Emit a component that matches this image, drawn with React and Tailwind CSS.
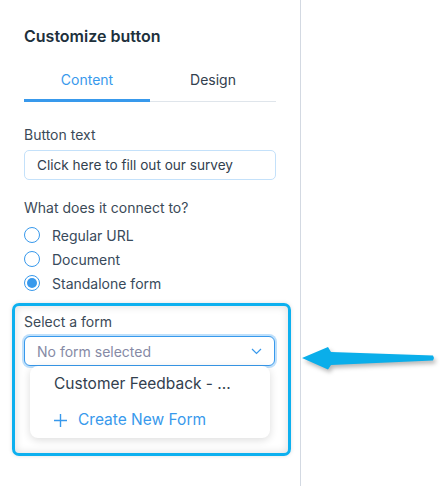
import { useState } from 'react';

const OPTIONS = ['Regular URL', 'Document', 'Standalone form'];

function Radio({ checked }) {
  return (
    <span className="w-[16px] h-[16px] rounded-full border border-[#3899ec] flex items-center justify-center bg-white shrink-0">
      {checked && <span className="w-[10px] h-[10px] rounded-full bg-[#3899ec]" />}
    </span>
  );
}

export default function App() {
  const [tab, setTab] = useState('content');
  const [choice, setChoice] = useState(2);

  return (
    <div className="relative w-[444px] h-[486px] bg-white overflow-hidden" style={{ fontFamily: 'Inter, "Liberation Sans", sans-serif' }}>
      <div className="w-[301px] h-full border-r border-[#d3d9e2] pl-6 pr-6">
        <h1 className="pt-[26px] text-[16px] leading-[20px] font-semibold text-[#20303c]">Customize button</h1>

        <div className="mt-6 flex">
          <button
            className={`flex-1 text-[14px] leading-[20px] ${tab === 'content' ? 'text-[#3899ec] pb-[9px] border-b-[3px] border-[#3899ec]' : 'text-[#32404e] pb-[11px] border-b border-[#dfe5eb]'}`}
            onClick={() => setTab('content')}
          >
            Content
          </button>
          <button
            className={`flex-1 text-[14px] leading-[20px] ${tab === 'design' ? 'text-[#3899ec] pb-[9px] border-b-[3px] border-[#3899ec]' : 'text-[#32404e] pb-[11px] border-b border-[#dfe5eb]'}`}
            onClick={() => setTab('design')}
          >
            Design
          </button>
        </div>

        <div className="mt-[23px] text-[14px] leading-[20px] text-[#3b4a57]">Button text</div>
        <div className="mt-[5px] h-[30px] rounded-[5px] border border-[#c4e1fa] flex items-center pl-[12px] text-[13.6px] text-[#32404e]">
          Click here to fill out our survey
        </div>

        <div className="mt-[18px] text-[14px] leading-[20px] text-[#3b4a57]">What does it connect to?</div>
        <div className="mt-[5px]">
          {OPTIONS.map((o, i) => (
            <div key={o} className="h-6 flex items-center gap-[12px] cursor-pointer" onClick={() => setChoice(i)}>
              <Radio checked={choice === i} />
              <span className="text-[14px] text-[#384a5b]">{o}</span>
            </div>
          ))}
        </div>

        <div className="mt-[8px] -ml-3 -mr-[15px] border-[3px] border-[#0db0ef] rounded-[7px] pl-[9px] pr-[13px] pt-[6px] pb-[15px] shadow-[inset_0_0_8px_rgba(0,0,0,0.14),0_0_4px_rgba(0,0,0,0.12)]">
          <div className="text-[14px] leading-[20px] text-[#3b4a57]">Select a form</div>
          <div className="mt-1 h-[30px] rounded-[6px] border border-[#3899ec] shadow-[0_0_0_2px_#bfe0fb] bg-white flex items-center justify-between pl-[12px] pr-[12px] text-[14px] text-[#868aa5]">
            <span>No form selected</span>
            <svg width="11" height="7" viewBox="0 0 11 7" fill="none">
              <path d="M1 1l4.5 4.5L10 1" stroke="#3899ec" strokeWidth="1.2" />
            </svg>
          </div>
          <div className="ml-[6px] w-[240px] bg-white rounded-[8px] shadow-[0_2px_8px_rgba(0,0,0,0.14)]">
            <div className="h-[36px] flex items-center pl-[24px] text-[15.5px] text-[#32404e]">Customer Feedback - ...</div>
            <div className="h-[36px] flex items-center pl-[24px] text-[15.5px] text-[#3899ec]">
              <svg width="13" height="13" viewBox="0 0 13 13" className="mr-[11px]">
                <path d="M6.5 0v13M0 6.5h13" stroke="#3899ec" strokeWidth="1.4" />
              </svg>
              Create New Form
            </div>
          </div>
        </div>
      </div>

      <svg
        className="absolute left-[300px] top-[340px] drop-shadow-[2px_3px_2px_rgba(0,0,0,0.28)]"
        width="140"
        height="36"
        viewBox="0 0 140 36"
      >
        <polygon points="2,18 28,7 31,12 133,15.5 134,18 133,20.5 31,25 28,29.5" fill="#0aaeea" />
      </svg>
    </div>
  );
}
